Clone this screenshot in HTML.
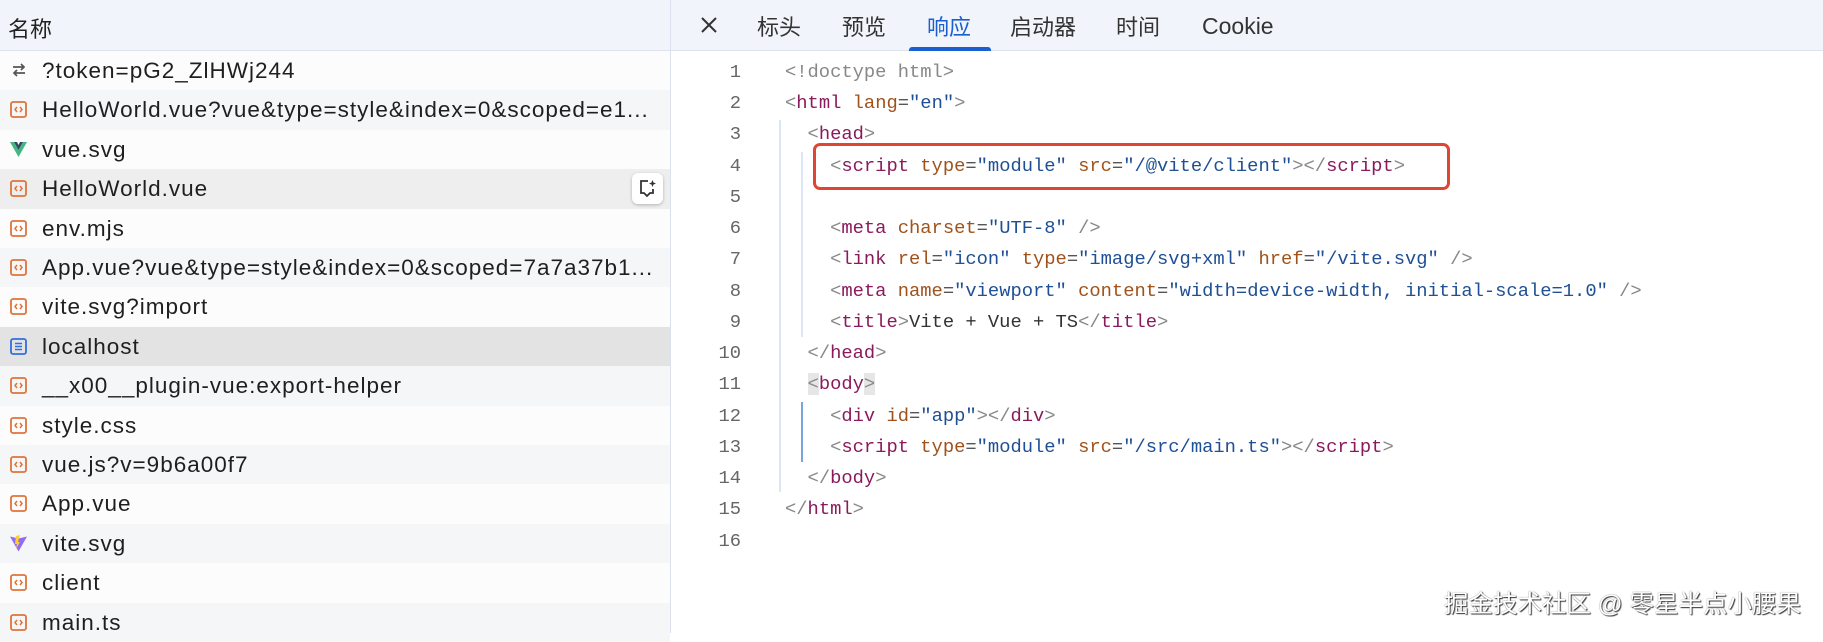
<!DOCTYPE html>
<html><head><meta charset="utf-8"><style>
*{margin:0;padding:0;box-sizing:border-box}
body{width:1823px;height:633px;overflow:hidden;background:#fff;font-family:"Liberation Sans","Noto Sans CJK SC",sans-serif;position:relative}
#left{position:absolute;left:0;top:0;width:670px;height:633px;background:#fbfbfc}
#lh{position:absolute;left:0;top:0;width:670px;height:51px;background:#f1f4fa;border-bottom:1px solid #dde2ee;font-size:22px;color:#222;padding:12px 0 0 8px}
.row{position:absolute;left:0;width:670px;height:39.4px;font-size:22.5px;letter-spacing:1px;color:#1f1f1f;line-height:39.4px;padding-left:42px;white-space:nowrap}
.row svg{position:absolute;left:10px;top:11px}
#div{position:absolute;left:670px;top:0;width:1px;height:633px;background:#dde1ee}
#rh{position:absolute;left:671px;top:0;width:1152px;height:51px;background:#f1f4fa;border-bottom:1px solid #dde2ee}
.tab{position:absolute;top:10px;font-size:22px;color:#333}
#code{position:absolute;left:668px;top:57px;width:1152px;font-family:"Liberation Mono","Noto Sans CJK SC",monospace;font-size:18.8px}
.ln{position:absolute;height:31.24px;line-height:31.24px;white-space:pre}
.n{width:73px;text-align:right;color:#666;left:0}
.c{left:117px;color:#555}
.t{color:#8b1a5c}.a{color:#a0521a}.v{color:#1f4f94}.g{color:#888}
</style></head><body>
<div id="left">
<div id="lh">名称</div>
<div class="row" style="top:51px;background:#fcfcfd"><svg width="18" height="16" viewBox="0 0 18 16"><path d="M3 5h10M11 2l3 3-3 3M15 11H5M7 8l-3 3 3 3" stroke="#555" stroke-width="1.7" fill="none"/></svg>?token=pG2_ZlHWj244</div>
<div class="row" style="top:90.4px;background:#f5f6f8"><svg width="17" height="17" viewBox="0 0 17 17"><rect x="1" y="1" width="15" height="15" rx="2" fill="none" stroke="#e0733a" stroke-width="1.8"/><path d="M7 6L5 8.5 7 11M10 6l2 2.5-2 2.5" stroke="#e0733a" stroke-width="1.5" fill="none"/></svg>HelloWorld.vue?vue&amp;type=style&amp;index=0&amp;scoped=e1...</div>
<div class="row" style="top:129.8px;background:#fcfcfd"><svg width="17" height="17" viewBox="0 0 17 17"><path d="M0 1h4l4.5 8L13 1h4L8.5 16z" fill="#41b883"/><path d="M4 1h3l1.5 3L10 1h3L8.5 9z" fill="#34495e"/></svg>vue.svg</div>
<div class="row" style="top:169.2px;background:#eeeeef"><svg width="17" height="17" viewBox="0 0 17 17"><rect x="1" y="1" width="15" height="15" rx="2" fill="none" stroke="#e0733a" stroke-width="1.8"/><path d="M7 6L5 8.5 7 11M10 6l2 2.5-2 2.5" stroke="#e0733a" stroke-width="1.5" fill="none"/></svg>HelloWorld.vue
<div style="position:absolute;left:632px;top:4px;width:31px;height:31px;background:#fff;border-radius:6px;box-shadow:0 1px 3px rgba(0,0,0,.25)"><svg style="left:7px;top:6px" width="18" height="20" viewBox="0 0 18 20"><path d="M9 2H2v12h3l3 3 3-3h3v-4" stroke="#333" stroke-width="1.8" fill="none"/><path d="M13.5 1l1 2.5 2.5 1-2.5 1-1 2.5-1-2.5-2.5-1 2.5-1z" fill="#333"/></svg></div></div>
<div class="row" style="top:208.6px;background:#fcfcfd"><svg width="17" height="17" viewBox="0 0 17 17"><rect x="1" y="1" width="15" height="15" rx="2" fill="none" stroke="#e0733a" stroke-width="1.8"/><path d="M7 6L5 8.5 7 11M10 6l2 2.5-2 2.5" stroke="#e0733a" stroke-width="1.5" fill="none"/></svg>env.mjs</div>
<div class="row" style="top:248px;background:#f5f6f8"><svg width="17" height="17" viewBox="0 0 17 17"><rect x="1" y="1" width="15" height="15" rx="2" fill="none" stroke="#e0733a" stroke-width="1.8"/><path d="M7 6L5 8.5 7 11M10 6l2 2.5-2 2.5" stroke="#e0733a" stroke-width="1.5" fill="none"/></svg>App.vue?vue&amp;type=style&amp;index=0&amp;scoped=7a7a37b1...</div>
<div class="row" style="top:287.4px;background:#fcfcfd"><svg width="17" height="17" viewBox="0 0 17 17"><rect x="1" y="1" width="15" height="15" rx="2" fill="none" stroke="#e0733a" stroke-width="1.8"/><path d="M7 6L5 8.5 7 11M10 6l2 2.5-2 2.5" stroke="#e0733a" stroke-width="1.5" fill="none"/></svg>vite.svg?import</div>
<div class="row" style="top:326.8px;background:#e3e3e3"><svg width="17" height="17" viewBox="0 0 17 17"><rect x="1" y="1" width="15" height="15" rx="2" fill="none" stroke="#2f6fe0" stroke-width="1.8"/><path d="M5 5.5h7M5 8.5h7M5 11.5h7" stroke="#2f6fe0" stroke-width="1.6"/></svg>localhost</div>
<div class="row" style="top:366.2px;background:#f5f6f8"><svg width="17" height="17" viewBox="0 0 17 17"><rect x="1" y="1" width="15" height="15" rx="2" fill="none" stroke="#e0733a" stroke-width="1.8"/><path d="M7 6L5 8.5 7 11M10 6l2 2.5-2 2.5" stroke="#e0733a" stroke-width="1.5" fill="none"/></svg>__x00__plugin-vue:export-helper</div>
<div class="row" style="top:405.6px;background:#fcfcfd"><svg width="17" height="17" viewBox="0 0 17 17"><rect x="1" y="1" width="15" height="15" rx="2" fill="none" stroke="#e0733a" stroke-width="1.8"/><path d="M7 6L5 8.5 7 11M10 6l2 2.5-2 2.5" stroke="#e0733a" stroke-width="1.5" fill="none"/></svg>style.css</div>
<div class="row" style="top:445px;background:#f5f6f8"><svg width="17" height="17" viewBox="0 0 17 17"><rect x="1" y="1" width="15" height="15" rx="2" fill="none" stroke="#e0733a" stroke-width="1.8"/><path d="M7 6L5 8.5 7 11M10 6l2 2.5-2 2.5" stroke="#e0733a" stroke-width="1.5" fill="none"/></svg>vue.js?v=9b6a00f7</div>
<div class="row" style="top:484.4px;background:#fcfcfd"><svg width="17" height="17" viewBox="0 0 17 17"><rect x="1" y="1" width="15" height="15" rx="2" fill="none" stroke="#e0733a" stroke-width="1.8"/><path d="M7 6L5 8.5 7 11M10 6l2 2.5-2 2.5" stroke="#e0733a" stroke-width="1.5" fill="none"/></svg>App.vue</div>
<div class="row" style="top:523.8px;background:#f5f6f8"><svg width="17" height="17" viewBox="0 0 17 17"><path d="M0 1.5l8.5 15 8.5-15-8.5 2z" fill="#8f6cf6"/><path d="M10 0L6 1l-1 8 2 0-1 5 4-7-2 0z" fill="#ffcc33"/></svg>vite.svg</div>
<div class="row" style="top:563.2px;background:#fcfcfd"><svg width="17" height="17" viewBox="0 0 17 17"><rect x="1" y="1" width="15" height="15" rx="2" fill="none" stroke="#e0733a" stroke-width="1.8"/><path d="M7 6L5 8.5 7 11M10 6l2 2.5-2 2.5" stroke="#e0733a" stroke-width="1.5" fill="none"/></svg>client</div>
<div class="row" style="top:602.6px;background:#f5f6f8"><svg width="17" height="17" viewBox="0 0 17 17"><rect x="1" y="1" width="15" height="15" rx="2" fill="none" stroke="#e0733a" stroke-width="1.8"/><path d="M7 6L5 8.5 7 11M10 6l2 2.5-2 2.5" stroke="#e0733a" stroke-width="1.5" fill="none"/></svg>main.ts</div>
</div>
<div id="div"></div>
<div id="rh">
<svg style="position:absolute;left:29px;top:16px" width="18" height="18" viewBox="0 0 18 18"><path d="M2 2l14 14M16 2L2 16" stroke="#333" stroke-width="2"/></svg>
<div class="tab" style="left:86px">标头</div>
<div class="tab" style="left:171px">预览</div>
<div class="tab" style="left:256px;color:#1a5fd0">响应</div>
<div style="position:absolute;left:238px;top:47px;width:82px;height:4px;background:#1a5fd0;border-radius:3px 3px 0 0"></div>
<div class="tab" style="left:339px">启动器</div>
<div class="tab" style="left:445px">时间</div>
<div class="tab" style="left:531px;top:13px;font-size:23px">Cookie</div>
</div>
<div style="position:absolute;left:779px;top:120px;width:2px;height:372px;background:#dbe6f6"></div>
<div style="position:absolute;left:801px;top:152px;width:2px;height:185px;background:#dbe6f6"></div>
<div style="position:absolute;left:801px;top:402px;width:2px;height:60px;background:#7aa3e0"></div>
<div style="position:absolute;left:813px;top:143px;width:637px;height:47px;border:3px solid #df4632;border-radius:7px"></div>
<div id="code">
<div class="ln n" style="top:0">1</div><div class="ln c g" style="top:0">&lt;!doctype html&gt;</div>
<div class="ln n" style="top:31.24px">2</div><div class="ln c" style="top:31.24px"><span class="g">&lt;</span><span class="t">html</span> <span class="a">lang</span>=<span class="v">"en"</span><span class="g">&gt;</span></div>
<div class="ln n" style="top:62.48px">3</div><div class="ln c" style="top:62.48px">  <span class="g">&lt;</span><span class="t">head</span><span class="g">&gt;</span></div>
<div class="ln n" style="top:93.72px">4</div><div class="ln c" style="top:93.72px">    <span class="g">&lt;</span><span class="t">script</span> <span class="a">type</span>=<span class="v">"module"</span> <span class="a">src</span>=<span class="v">"/@vite/client"</span><span class="g">&gt;&lt;/</span><span class="t">script</span><span class="g">&gt;</span></div>
<div class="ln n" style="top:124.96px">5</div>
<div class="ln n" style="top:156.2px">6</div><div class="ln c" style="top:156.2px">    <span class="g">&lt;</span><span class="t">meta</span> <span class="a">charset</span>=<span class="v">"UTF-8"</span> <span class="g">/&gt;</span></div>
<div class="ln n" style="top:187.44px">7</div><div class="ln c" style="top:187.44px">    <span class="g">&lt;</span><span class="t">link</span> <span class="a">rel</span>=<span class="v">"icon"</span> <span class="a">type</span>=<span class="v">"image/svg+xml"</span> <span class="a">href</span>=<span class="v">"/vite.svg"</span> <span class="g">/&gt;</span></div>
<div class="ln n" style="top:218.68px">8</div><div class="ln c" style="top:218.68px">    <span class="g">&lt;</span><span class="t">meta</span> <span class="a">name</span>=<span class="v">"viewport"</span> <span class="a">content</span>=<span class="v">"width=device-width, initial-scale=1.0"</span> <span class="g">/&gt;</span></div>
<div class="ln n" style="top:249.92px">9</div><div class="ln c" style="top:249.92px">    <span class="g">&lt;</span><span class="t">title</span><span class="g">&gt;</span><span style="color:#333">Vite + Vue + TS</span><span class="g">&lt;/</span><span class="t">title</span><span class="g">&gt;</span></div>
<div class="ln n" style="top:281.16px">10</div><div class="ln c" style="top:281.16px">  <span class="g">&lt;/</span><span class="t">head</span><span class="g">&gt;</span></div>
<div class="ln n" style="top:312.4px">11</div><div class="ln c" style="top:312.4px">  <span class="g" style="background:#e6e6e6">&lt;</span><span class="t">body</span><span class="g" style="background:#e6e6e6">&gt;</span></div>
<div class="ln n" style="top:343.64px">12</div><div class="ln c" style="top:343.64px">    <span class="g">&lt;</span><span class="t">div</span> <span class="a">id</span>=<span class="v">"app"</span><span class="g">&gt;&lt;/</span><span class="t">div</span><span class="g">&gt;</span></div>
<div class="ln n" style="top:374.88px">13</div><div class="ln c" style="top:374.88px">    <span class="g">&lt;</span><span class="t">script</span> <span class="a">type</span>=<span class="v">"module"</span> <span class="a">src</span>=<span class="v">"/src/main.ts"</span><span class="g">&gt;&lt;/</span><span class="t">script</span><span class="g">&gt;</span></div>
<div class="ln n" style="top:406.12px">14</div><div class="ln c" style="top:406.12px">  <span class="g">&lt;/</span><span class="t">body</span><span class="g">&gt;</span></div>
<div class="ln n" style="top:437.36px">15</div><div class="ln c" style="top:437.36px"><span class="g">&lt;/</span><span class="t">html</span><span class="g">&gt;</span></div>
<div class="ln n" style="top:468.6px">16</div>
</div>
<div style="position:absolute;left:1444px;top:585px;font-size:24.5px;color:#fff;text-shadow:1px 1px 1px #333,0 0 1px #555;white-space:nowrap">掘金技术社区 @ 零星半点小腰果</div>
</body></html>
